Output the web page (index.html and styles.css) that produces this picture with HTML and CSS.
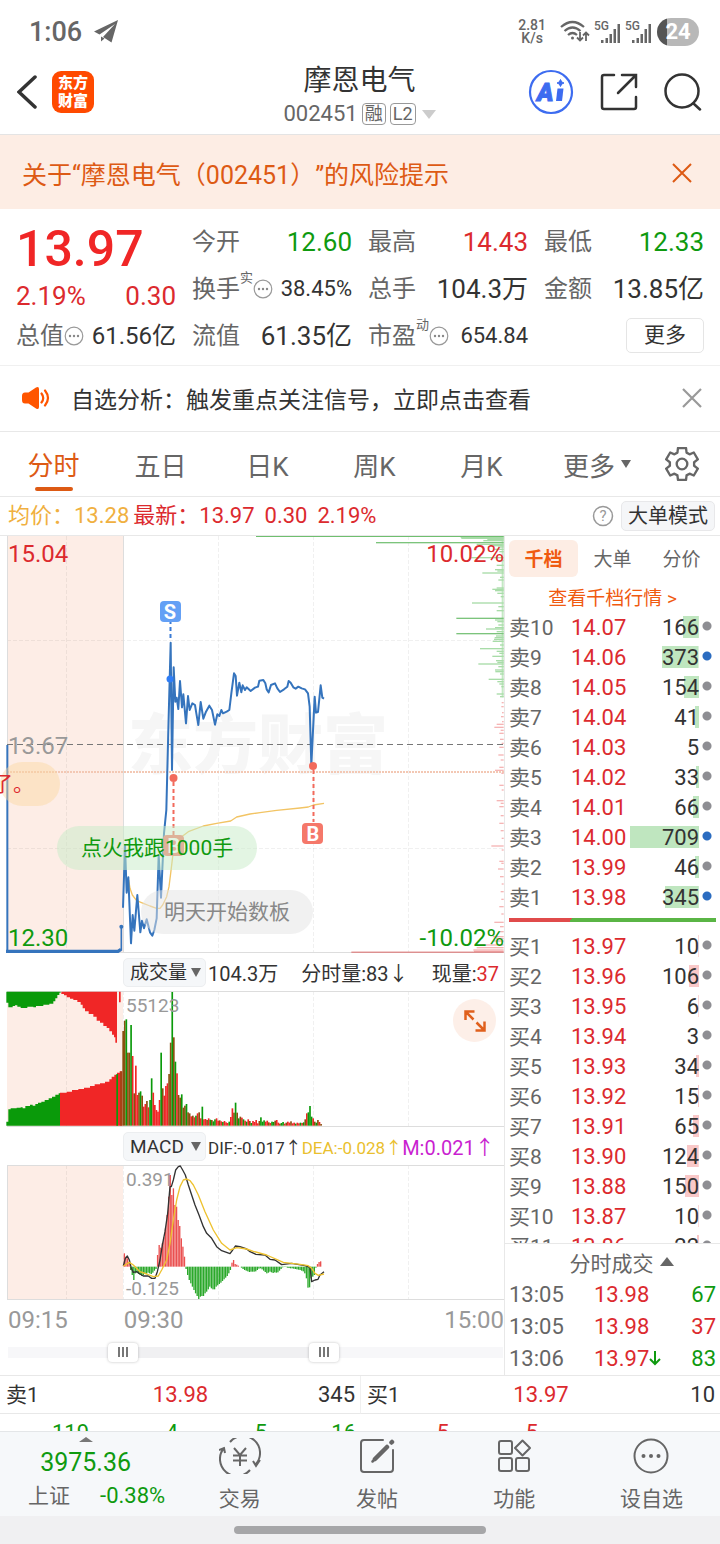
FILE: index.html
```html
<!DOCTYPE html>
<html lang="zh-CN">

<head>
    <meta charset="UTF-8">
    <meta name="viewport" content="width=device-width, initial-scale=1.0">
    <title>摩恩电气 002451</title>
    <link rel="stylesheet" href="styles.css">
</head>

<body>
    <!-- 系统状态栏 -->
    <div class="status-bar">
        <span class="clock">1:06</span>
        <svg class="plane" viewBox="0 0 24 24" width="24" height="24" fill="#666">
            <path d="M24 0 0 11.500 5.500 14.500 21 4 9 17 17.500 22.500z" />
            <path d="M7 16.500V21.500L10.500 18.500z" />
        </svg>
        <span class="net-speed">2.81<br>K/s</span>
        <svg viewBox="0 0 30 24" width="30" height="24" fill="none" stroke="#666" stroke-width="2.2">
            <path d="M1 7Q12.500-3 24 7M4.500 11Q12.500 4 20.500 11M8 15Q12.500 11 17 15" />
            <circle cx="12.500" cy="18" r="1.500" fill="#666" stroke="none" />
            <path d="M20 12v8M17 17.500l3 3 3-3M26 21v-8M23 15.500l3-3 3 3" stroke-width="1.800" />
        </svg>
        <span class="signal"><b>5G</b>
            <svg viewBox="0 0 20 20" width="20" height="20" fill="#666">
                <path d="M0 17h2.500v3H0zM4.500 15H7v5H4.500zM8.500 11H11v9H8.500zM12.500 6H15v14h-2.500zM16.500 1H19v19h-2.500z" />
            </svg>
        </span>
        <span class="signal"><b>5G</b>
            <svg viewBox="0 0 20 20" width="20" height="20" fill="#666">
                <path d="M0 17h2.500v3H0zM4.500 15H7v5H4.500zM8.500 11H11v9H8.500zM12.500 6H15v14h-2.500zM16.500 1H19v19h-2.500z" />
            </svg>
        </span>
        <span class="battery">24</span>
    </div>

    <!-- 顶部标题 -->
    <header class="header">
        <div class="header-left">
            <button class="icon-btn" aria-label="返回">
                <svg viewBox="0 0 20 34" width="20" height="34" fill="none" stroke="#333" stroke-width="3.500"
                    stroke-linecap="round">
                    <path d="M18 2 2 17 18 32" />
                </svg>
            </button>
            <div class="logo">东方<br>财富</div>
        </div>
        <div class="header-title">
            <h1>摩恩电气</h1>
            <div class="code">002451<span class="tag">融</span><span class="tag">L2</span><i class="triangle"></i></div>
        </div>
        <div class="header-right">
            <button class="icon-btn" aria-label="Ai">
                <svg viewBox="0 0 46 46" width="46" height="46">
                    <circle cx="23" cy="23" r="21" fill="none" stroke="#3d6cf0" stroke-width="2.200" />
                    <text class="ai-text" x="9" y="32">A</text>
                    <path d="M29.500 19.500h6L34 32h-6z" fill="#3d6cf0" />
                    <path d="M32.500 10.500l1.200 2.400 2.300 1.100-2.300 1.100-1.200 2.400-1.200-2.400-2.300-1.100 2.300-1.100z"
                        fill="#3d6cf0" stroke="#3d6cf0" />
                </svg>
            </button>
            <button class="icon-btn" aria-label="分享">
                <svg viewBox="0 0 38 38" width="38" height="38" fill="none" stroke="#333" stroke-width="2.500"
                    stroke-linecap="round">
                    <path d="M14 2H4Q2 2 2 4v30q0 2 2 2h30q2 0 2-2V24M22 2h14v12M36 2 18 20" />
                </svg>
            </button>
            <button class="icon-btn" aria-label="搜索">
                <svg viewBox="0 0 38 38" width="38" height="38" fill="none" stroke="#333" stroke-width="2.500"
                    stroke-linecap="round">
                    <circle cx="18" cy="18" r="16.500" />
                    <path d="M29.500 30.500 36 36.500" />
                </svg>
            </button>
        </div>
    </header>

    <!-- 风险提示 -->
    <div class="notice">
        <a href="#">关于“摩恩电气（002451）”的风险提示</a>
        <button class="icon-btn" aria-label="关闭提示">
            <svg viewBox="0 0 20 20" width="20" height="20" stroke="#dd5a14" stroke-width="2">
                <path d="M1 1 19 19M19 1 1 19" />
            </svg>
        </button>
    </div>

    <!-- 行情数据 -->
    <section class="quote">
        <div class="quote-main">
            <div class="price">13.97</div>
            <div class="change"><span>2.19%</span><span>0.30</span></div>
        </div>
        <div class="cell"><span>今开</span><b class="green">12.60</b></div>
        <div class="cell"><span>最高</span><b class="red">14.43</b></div>
        <div class="cell"><span>最低</span><b class="green">12.33</b></div>
        <div class="cell"><span>换手<sup>实</sup><svg class="dots" viewBox="0 0 20 20" width="20" height="20"><use href="#dots" /></svg></span><b class="small">38.45%</b></div>
        <div class="cell"><span>总手</span><b>104.3万</b></div>
        <div class="cell"><span>金额</span><b>13.85亿</b></div>
        <div class="cell"><span>总值<svg class="dots" viewBox="0 0 20 20" width="20" height="20"><use href="#dots" /></svg></span><b class="mid">61.56亿</b></div>
        <div class="cell"><span>流值</span><b>61.35亿</b></div>
        <div class="cell"><span>市盈<sup>动</sup><svg class="dots" viewBox="0 0 20 20" width="20" height="20"><use href="#dots" /></svg></span><b class="small">654.84</b></div>
        <div class="cell cell-more"><button class="more-btn">更多</button></div>
        <svg class="defs" width="0" height="0">
            <symbol id="dots" viewBox="0 0 20 20">
                <circle cx="10" cy="10" r="8.800" fill="none" stroke="#999" stroke-width="1.200" />
                <circle cx="6" cy="10" r="1.200" fill="#888" />
                <circle cx="10" cy="10" r="1.200" fill="#888" />
                <circle cx="14" cy="10" r="1.200" fill="#888" />
            </symbol>
        </svg>
    </section>

    <!-- 自选分析 -->
    <div class="tip">
        <svg viewBox="0 0 28 22" width="28" height="22" fill="#ff5500">
            <path d="M0 9Q0 5.500 3 5.500h3.500L14 .5Q17-1 17 2v18q0 3-3 1.500L6.500 16.500H3q-3 0-3-3.500z" />
            <path d="M19.500 6.500q3.500 4.500 0 9M23 3.500q6 7.500 0 15" fill="none" stroke="#ff5500" stroke-width="2.200"
                stroke-linecap="round" />
        </svg>
        <a href="#">自选分析：触发重点关注信号，立即点击查看</a>
        <button class="icon-btn" aria-label="关闭">
            <svg viewBox="0 0 20 20" width="20" height="20" stroke="#999" stroke-width="2.200">
                <path d="M1 1 19 19M19 1 1 19" />
            </svg>
        </button>
    </div>

    <!-- 周期切换 -->
    <nav class="tabs">
        <button class="active">分时</button>
        <button>五日</button>
        <button>日K</button>
        <button>周K</button>
        <button>月K</button>
        <button>更多<i class="triangle"></i></button>
        <button aria-label="设置">
            <svg viewBox="0 0 32 32" width="34" height="34" fill="none" stroke="#666" stroke-width="2.200"
                stroke-linejoin="round">
                <path d="M11.700 5.300 12.200 1h7.600l.5 4.300 2.800 1.600 4-1.700 3.800 6.500-3.500 2.700v3.200l3.500 2.700-3.800 6.500-4-1.700-2.800 1.600-.5 4.300h-7.600l-.5-4.300-2.800-1.600-4 1.700-3.800-6.500 3.500-2.700v-3.200l-3.500-2.700 3.800-6.500 4 1.700z" />
                <circle cx="16" cy="16" r="5" />
            </svg>
        </button>
    </nav>

    <div class="info">
        <span class="avg">均价：13.28</span>
        <span class="red">最新：13.97</span>
        <span class="red num">0.30</span>
        <span class="red num">2.19%</span>
        <button class="icon-btn help" aria-label="帮助">
            <svg viewBox="0 0 22 22" width="22" height="22">
                <circle cx="11" cy="11" r="9.500" fill="none" stroke="#999" stroke-width="1.500" />
                <text x="11" y="16" text-anchor="middle">?</text>
            </svg>
        </button>
        <button class="mode-btn">大单模式</button>
    </div>

    <main class="main">
        <div class="charts">
            <!-- 分时图 -->
            <div class="chart">
                <svg viewBox="0 0 504 417">
                    <rect class="pre" x="7" y="0" width="116" height="416" />
                    <path class="grid" d="M66.500 0V416M218.500 0V416M313.500 0V416M408.500 0V416M7 104.500H504M7 312.500H504" />
                    <path class="frame" d="M7.500 0V416M123.500 0V416M7 416.500H504" />
                    <text class="watermark" x="128" y="232">东方财富</text>
                    <path d="M7 208.500H504" stroke="#777" stroke-dasharray="6 4" />
                    <path d="M7 236H504" stroke="#f3c8b4" stroke-width="2" stroke-dasharray="2 1" />
                    <svg id="priceLayer" width="504" height="417" viewBox="0 18 1512 1251"></svg>
                    <text class="label up" x="8" y="26">15.04</text>
                    <text class="label" x="8" y="218">13.67</text>
                    <text class="label down" x="8" y="410">12.30</text>
                    <text class="label up end" x="504" y="26">10.02%</text>
                    <text class="label down end" x="504" y="410">-10.02%</text>
                    <path d="M170.500 84V104" stroke="#3a7bd5" stroke-width="2" stroke-dasharray="4 3" />
                    <path d="M173.500 246V302M313.500 234V286" stroke="#f26a5c" stroke-width="2" stroke-dasharray="4 3" />
                    <circle cx="170" cy="143" r="3.500" fill="#2f7df6" />
                    <circle cx="173.500" cy="242" r="4" fill="#f26a5c" />
                    <circle cx="313" cy="230" r="4" fill="#f26a5c" />
                    <rect x="160" y="65" width="21" height="21" rx="4" fill="#64a0f5" />
                    <text class="mark" x="170" y="83">S</text>
                    <rect x="163" y="299" width="21" height="21" rx="4" fill="#f5786a" />
                    <text class="mark" x="174" y="317">B</text>
                    <rect x="302" y="287" width="21" height="21" rx="4" fill="#f5786a" />
                    <text class="mark" x="313" y="305">B</text>
                </svg>
                <span class="bullet bullet-orange">了。</span>
                <span class="bullet bullet-green">点火我跟1000手</span>
                <span class="bullet bullet-gray">明天开始数板</span>
            </div>

            <div class="toolbar">
                <label class="picker"><select aria-label="指标一">
                        <option>成交量</option>
                    </select></label>
                <span>104.3万</span>
                <span class="push">分时量:83↓</span>
                <span class="push">现量:<em class="red">37</em></span>
            </div>

            <!-- 成交量 -->
            <div class="chart">
                <svg viewBox="0 0 504 136">
                    <rect class="pre" x="7" y="0" width="116" height="135" />
                    <path class="grid" d="M66.500 0V135M123.500 0V135M218.500 0V135M313.500 0V135M408.500 0V135" />
                    <path class="frame" d="M7 .5H504M7 135.500H504" />
                    <svg id="volumeLayer" width="504" height="136" viewBox="0 123 1512 408"></svg>
                    <text class="label mini" x="126" y="21">55123</text>
                </svg>
                <button class="expand" aria-label="全屏">
                    <svg viewBox="0 0 22 22" width="22" height="22" fill="none" stroke="#e0601c" stroke-width="2.500">
                        <path d="M1.500 10V1.500h9M1.500 1.500l8 8M11.500 20.500h9v-9M20.500 20.500l-8-8" />
                    </svg>
                </button>
            </div>

            <div class="toolbar macd">
                <label class="picker"><select aria-label="指标二">
                        <option>MACD</option>
                    </select></label>
                <span class="tight">DIF:-0.017↑</span>
                <span class="tight dea">DEA:-0.028↑</span>
                <span class="hist">M:0.021↑</span>
            </div>

            <!-- MACD -->
            <div class="chart">
                <svg viewBox="0 0 504 135">
                    <rect class="pre" x="7" y="0" width="116" height="134" />
                    <path class="grid" d="M66.500 0V134M123.500 0V134M218.500 0V134M313.500 0V134M408.500 0V134" />
                    <path class="frame" d="M7 .5H504M7 134.500H504M7.500 0V134" />
                    <text class="label mini" x="126" y="21">0.391</text>
                    <text class="label mini" x="126" y="130">-0.125</text>
                    <svg id="macdLayer" width="504" height="135" viewBox="0 645 1512 405"></svg>
                </svg>
            </div>

            <div class="axis"><span>09:15</span><span>09:30</span><span class="last">15:00</span></div>
            <div class="range">
                <input type="range" min="0" max="1000" value="215" aria-label="开始时间">
                <input type="range" min="0" max="1000" value="647" aria-label="结束时间">
            </div>
        </div>

        <!-- 盘口 -->
        <aside class="book">
            <div class="book-tabs">
                <button class="active">千档</button>
                <button>大单</button>
                <button>分价</button>
            </div>
            <a class="book-link" href="#">查看千档行情 &gt;</a>
            <table class="levels sell">
                <tr><th>卖10</th><td>14.07</td><td class="qty" style="--w: 23%">166</td><td class="dot"></td></tr>
                <tr><th>卖9</th><td>14.06</td><td class="qty" style="--w: 53%">373</td><td class="dot big"></td></tr>
                <tr><th>卖8</th><td>14.05</td><td class="qty" style="--w: 22%">154</td><td class="dot"></td></tr>
                <tr><th>卖7</th><td>14.04</td><td class="qty" style="--w: 6%">41</td><td class="dot"></td></tr>
                <tr><th>卖6</th><td>14.03</td><td class="qty" style="--w: 0%">5</td><td class="dot"></td></tr>
                <tr><th>卖5</th><td>14.02</td><td class="qty" style="--w: 5%">33</td><td class="dot"></td></tr>
                <tr><th>卖4</th><td>14.01</td><td class="qty" style="--w: 9%">66</td><td class="dot"></td></tr>
                <tr><th>卖3</th><td>14.00</td><td class="qty" style="--w: 100%">709</td><td class="dot big"></td></tr>
                <tr><th>卖2</th><td>13.99</td><td class="qty" style="--w: 6%">46</td><td class="dot"></td></tr>
                <tr><th>卖1</th><td>13.98</td><td class="qty" style="--w: 49%">345</td><td class="dot big"></td></tr>
            </table>
            <div class="ratio"></div>
            <div class="buy-window">
                <table class="levels buy">
                    <tr><th>买1</th><td>13.97</td><td class="qty" style="--w: 1%">10</td><td class="dot"></td></tr>
                    <tr><th>买2</th><td>13.96</td><td class="qty" style="--w: 15%">106</td><td class="dot"></td></tr>
                    <tr><th>买3</th><td>13.95</td><td class="qty" style="--w: 1%">6</td><td class="dot"></td></tr>
                    <tr><th>买4</th><td>13.94</td><td class="qty" style="--w: 0%">3</td><td class="dot"></td></tr>
                    <tr><th>买5</th><td>13.93</td><td class="qty" style="--w: 5%">34</td><td class="dot"></td></tr>
                    <tr><th>买6</th><td>13.92</td><td class="qty" style="--w: 2%">15</td><td class="dot"></td></tr>
                    <tr><th>买7</th><td>13.91</td><td class="qty" style="--w: 9%">65</td><td class="dot"></td></tr>
                    <tr><th>买8</th><td>13.90</td><td class="qty" style="--w: 17%">124</td><td class="dot"></td></tr>
                    <tr><th>买9</th><td>13.88</td><td class="qty" style="--w: 21%">150</td><td class="dot"></td></tr>
                    <tr><th>买10</th><td>13.87</td><td class="qty" style="--w: 1%">10</td><td class="dot"></td></tr>
                    <tr><th>买11</th><td>13.86</td><td class="qty" style="--w: 3%">22</td><td class="dot"></td></tr>
                </table>
            </div>
            <button class="deals-title">分时成交<i class="triangle"></i></button>
            <table class="deals">
                <tr><th>13:05</th><td>13.98</td><td class="green">67</td></tr>
                <tr><th>13:05</th><td>13.98</td><td class="red">37</td></tr>
                <tr><th>13:06</th><td>13.97<svg viewBox="0 0 12 16" width="12" height="16" fill="none" stroke="#0f9a0f" stroke-width="2"><path d="M6 1v13M1 9l5 5 5-5" /></svg></td><td class="green">83</td></tr>
            </table>
        </aside>
    </main>

    <!-- 买一卖一 -->
    <section class="best">
        <div class="side"><span>卖1</span><span class="red">13.98</span><span>345</span></div>
        <div class="side"><span>买1</span><span class="red">13.97</span><span>10</span></div>
        <div class="queue green"><span>119</span><span>4</span><span>5</span><span>16</span></div>
        <div class="queue red"><span>5</span><span>5</span><span></span><span></span></div>
    </section>

    <footer class="bottom-nav">
        <button class="index">
            <i class="triangle"></i>
            <span class="index-value">3975.36</span>
            <span class="index-row"><span class="name">上证</span><span>-0.38%</span></span>
        </button>
        <button>
            <svg viewBox="0 0 42 36" width="42" height="36" fill="none" stroke="#666" stroke-width="2">
                <path d="M11 4A17 17 0 0 1 37 26M41 22l-4 6-3-5M31 32A17 17 0 0 1 5 10M0 12l5-2 1 5" />
                <path d="M15 10l6 7 6-7M21 17v11M14 17.500h14M14 22.500h14" />
            </svg>
            交易
        </button>
        <button>
            <svg viewBox="0 0 36 36" width="36" height="36" fill="none" stroke="#666" stroke-width="2"
                stroke-linecap="round">
                <path d="M24 2H5Q2 2 2 5v26q0 3 3 3h26q3 0 3-3V12" />
                <path d="M16 21 28 9M32.500 4.500l.5-.5" stroke-width="4.500" />
                <path d="M13.500 23.500 18 19" stroke-width="2.500" />
            </svg>
            发帖
        </button>
        <button>
            <svg viewBox="0 0 36 36" width="36" height="36" fill="none" stroke="#666" stroke-width="2"
                stroke-linejoin="round">
                <rect x="3" y="3" width="13" height="13" rx="2" />
                <rect x="3" y="20" width="13" height="13" rx="2" />
                <rect x="20" y="20" width="13" height="13" rx="2" />
                <path d="M26.500 2.500 34 10l-7.500 7.500L19 10z" />
            </svg>
            功能
        </button>
        <button>
            <svg viewBox="0 0 36 36" width="36" height="36" fill="#666">
                <circle cx="18" cy="18" r="16.500" fill="none" stroke="#666" stroke-width="2" />
                <circle cx="10.500" cy="18" r="2" />
                <circle cx="18" cy="18" r="2" />
                <circle cx="25.500" cy="18" r="2" />
            </svg>
            设自选
        </button>
    </footer>
    <div class="gesture"><i></i></div>

    <script src="script.js"></script>
</body>

</html>
```
FILE: styles.css
```css
* {
    box-sizing: border-box;
}

body {
    margin: 0;
    background: #fff;
    color: #333;
    font-family: Roboto, "Noto Sans CJK SC", sans-serif;
    font-size: 22px;
}

button {
    padding: 0;
    border: none;
    background: none;
    color: inherit;
    font: inherit;
    cursor: pointer;
}

a {
    color: inherit;
    text-decoration: none;
}

svg {
    display: block;
    flex: none;
}

b,
em,
i {
    font-weight: normal;
    font-style: normal;
}

.red {
    color: #dc2a2e;
}

.green {
    color: #0f9a0f;
}

.icon-btn {
    display: flex;
}

/* 小三角 */
.triangle {
    display: inline-block;
    border: 5px solid transparent;
    border-top: 8px solid #666;
    border-bottom: none;
}

/* 状态栏 */
.status-bar {
    display: flex;
    align-items: center;
    height: 64px;
    padding: 0 21px 0 29px;
    color: #666;
}

.clock {
    font-size: 27px;
    font-weight: 500;
}

.plane {
    margin: 0 auto 0 12px;
}

.net-speed {
    margin-right: 14px;
    font-size: 14px;
    font-weight: 500;
    line-height: 13px;
    text-align: center;
}

.signal {
    display: flex;
    align-items: flex-start;
    margin-left: 4px;
}

.signal b {
    margin-right: -8px;
    font-size: 12px;
    font-weight: 500;
    line-height: 10px;
}

.signal svg {
    margin-top: 2px;
}

.battery {
    width: 42px;
    margin-left: 5px;
    border-radius: 14px;
    background: linear-gradient(90deg, #555 10px, #b8b8b8 10px);
    color: #fff;
    font-size: 22px;
    font-weight: 700;
    line-height: 28px;
    text-align: center;
}

/* 标题栏 */
.header {
    display: grid;
    grid-template-columns: 1fr auto 1fr;
    align-items: center;
    height: 71px;
    padding: 0 18px 14px 17px;
    border-bottom: 1px solid #e4e4e4;
}

.header-left,
.header-right {
    display: flex;
    align-items: center;
    margin-bottom: 10px;
}

.header-left {
    gap: 15px;
}

.header-right {
    justify-content: flex-end;
    gap: 26px;
}

.logo {
    width: 42px;
    padding: 3px 0;
    border-radius: 9px;
    background: #ff4a00;
    color: #fff;
    font-size: 15px;
    font-weight: 900;
    line-height: 18px;
    text-align: center;
}

.header-title {
    text-align: center;
}

.header-title h1 {
    margin: 0;
    font-size: 28px;
    font-weight: normal;
    line-height: 34px;
}

.code {
    display: flex;
    align-items: center;
    justify-content: center;
    color: #666;
    font-size: 22px;
    line-height: 32px;
}

.tag {
    margin-left: 4px;
    padding: 0 2px;
    border: 1px solid #999;
    border-radius: 4px;
    font-size: 18px;
    line-height: 20px;
}

.code .triangle {
    margin-left: 6px;
    border-width: 9px 7px 0;
    border-top-color: #ccc;
}

.ai-text {
    fill: #3d6cf0;
    stroke: #3d6cf0;
    font-size: 25px;
    font-style: italic;
    font-weight: 900;
}

/* 风险提示 */
.notice {
    display: flex;
    align-items: center;
    justify-content: space-between;
    height: 74px;
    padding: 2px 28px 0 22px;
    background: #fdede4;
    color: #dd5a14;
    font-size: 25px;
    text-spacing-trim: space-all;
}

/* 行情 */
.quote {
    display: grid;
    grid-template-columns: repeat(4, 1fr);
    grid-auto-rows: 47px;
    column-gap: 16px;
    padding: 9px 16px 6px;
    border-bottom: 1px solid #f0f0f0;
    font-size: 26px;
}

.quote-main {
    grid-row: span 2;
    color: #dc2a2e;
}

.price {
    color: #f02626;
    font-size: 50px;
    font-weight: 500;
    line-height: 63px;
}

.change {
    display: flex;
    justify-content: space-between;
    line-height: 31px;
}

.cell {
    display: flex;
    align-items: center;
    justify-content: space-between;
    line-height: 36px;
    white-space: nowrap;
}

.cell > span {
    display: flex;
    align-items: center;
    color: #666;
    font-size: 24px;
}

.cell sup {
    align-self: flex-start;
    font-size: 13px;
    line-height: 13px;
}

.cell .small {
    font-size: 22px;
}

.cell .mid {
    font-size: 24px;
}

.cell-more {
    justify-content: flex-end;
}

.more-btn {
    width: 78px;
    border: 1px solid #e5e5e5;
    border-radius: 5px;
    font-size: 21px;
    line-height: 33px;
}

.defs {
    position: absolute;
}

/* 自选分析 */
.tip {
    display: flex;
    align-items: center;
    height: 66px;
    padding: 0 18px 2px 22px;
    border-bottom: 1px solid #e8e8e8;
    font-size: 23px;
}

.tip a {
    flex: 1;
    padding-left: 21px;
}

/* 周期 */
.tabs {
    display: grid;
    grid-template-columns: repeat(5, 107fr) 124fr 46fr;
    height: 65px;
    padding-right: 15px;
    border-bottom: 1px solid #e8e8e8;
    color: #666;
    font-size: 26px;
}

.tabs button {
    display: flex;
    align-items: center;
    justify-content: center;
}

.tabs .active {
    flex-direction: column;
    justify-content: flex-end;
    padding-bottom: 5px;
    color: #dd5a14;
    line-height: 42px;
}

.tabs .active::after {
    content: "";
    width: 38px;
    height: 4px;
    border-radius: 2px;
    background: #dd5a14;
}

.tabs .triangle {
    margin-left: 6px;
}

.info {
    display: flex;
    align-items: center;
    height: 39px;
    padding: 0 5px 0 8px;
    border-bottom: 1px solid #e8e8e8;
    line-height: 34px;
}

.info .avg {
    margin-right: 4px;
    color: #f0b040;
}

.info .num {
    margin-left: 10px;
}

.info .help {
    margin: 0 7px 0 auto;
}

.help text {
    fill: #999;
    font-size: 15px;
}

.mode-btn {
    width: 94px;
    border: 1px solid #e8e8ea;
    border-radius: 5px;
    background: #f5f6f8;
    font-size: 20px;
    line-height: 28px;
}

/* 图表 */
.main {
    display: grid;
    grid-template-columns: 7fr 3fr;
    border-bottom: 1px solid #e8e8e8;
}

.charts {
    min-width: 0;
}

.chart {
    position: relative;
    overflow: hidden;
}

.chart > svg {
    width: 100%;
}

.pre {
    fill: #fdede6;
}

.grid {
    fill: none;
    stroke: #000;
    stroke-dasharray: 4 2;
    stroke-opacity: .06;
}

.frame {
    fill: none;
    stroke: #ddd;
}

.watermark {
    fill: #f6f6f6;
    font-size: 65px;
    font-weight: 900;
}

.label {
    fill: #999;
    font-size: 24px;
}

.label.up {
    fill: #dc2a2e;
}

.label.down {
    fill: #0f9a0f;
}

.label.end {
    text-anchor: end;
}

.label.mini {
    font-size: 19px;
}

.mark {
    fill: #fff;
    font-size: 20px;
    font-weight: 700;
    text-anchor: middle;
}

/* 弹幕 */
.bullet {
    position: absolute;
    border-radius: 22px;
    font-size: 21px;
    line-height: 44px;
    white-space: nowrap;
}

.bullet-orange {
    top: 226px;
    left: 0;
    width: 60px;
    background: rgba(250, 215, 160, .45);
    color: #dc2a2e;
    text-indent: -8px;
}

.bullet-green {
    top: 290px;
    left: 57px;
    padding: 0 24px;
    background: rgba(200, 235, 200, .5);
    color: #0f9a0f;
}

.bullet-gray {
    top: 354px;
    left: 141px;
    padding: 0 23px;
    background: rgba(228, 228, 228, .5);
    color: #888;
}

.toolbar {
    display: flex;
    align-items: center;
    height: 38px;
    padding: 0 5px 0 123px;
    font-size: 20px;
    white-space: nowrap;
}

.toolbar .push {
    margin-left: auto;
}

.toolbar .tight {
    font-size: 17px;
}

.toolbar .dea {
    color: #eabf2e;
}

.toolbar .hist {
    color: #c91fd0;
}

.picker {
    position: relative;
    margin-right: 2px;
}

.picker::after {
    content: "";
    position: absolute;
    top: 10px;
    right: 5px;
    border: 5px solid transparent;
    border-top: 9px solid #666;
    border-bottom: none;
    pointer-events: none;
}

.picker select {
    display: block;
    width: 83px;
    height: 29px;
    padding: 0 0 0 6px;
    border: 1px solid #eceef0;
    border-radius: 5px;
    background: #f5f7f9;
    color: #333;
    font: inherit;
    font-size: 19px;
    appearance: none;
}

.expand {
    position: absolute;
    top: 8px;
    right: 8px;
    display: flex;
    align-items: center;
    justify-content: center;
    width: 43px;
    height: 43px;
    border-radius: 50%;
    background: #fdefe8;
}

.axis {
    display: flex;
    gap: 56px;
    padding-left: 8px;
    color: #999;
    font-size: 24px;
    line-height: 41px;
}

.axis .last {
    margin-left: auto;
}

/* 区间滑块 */
.range {
    display: grid;
    align-items: center;
    height: 22px;
    margin: 0 1px 12px 8px;
    background: linear-gradient(90deg, #f7f7f9 23%, #f0f0f2 23% 64%, #f7f7f9 64%) center / 100% 11px no-repeat;
}

.range input {
    grid-area: 1 / 1;
    width: 100%;
    height: 20px;
    margin: 0;
    background: none;
    appearance: none;
    pointer-events: none;
}

.range input::-webkit-slider-thumb {
    width: 30px;
    height: 19px;
    border-radius: 4px;
    background:
        linear-gradient(90deg, #777 2px, transparent 2px 4px, #777 4px 6px, transparent 6px 8px, #777 8px) center / 10px 10px no-repeat,
        #fff;
    box-shadow: 0 0 3px rgba(0, 0, 0, .25);
    appearance: none;
    pointer-events: auto;
}

/* 盘口 */
.book {
    padding: 4px 4px 0;
    border-left: 1px solid #e8e8e8;
}

.book-tabs {
    display: grid;
    grid-template-columns: repeat(3, 1fr);
    color: #666;
    font-size: 19px;
}

.book-tabs button {
    padding-top: 3px;
    line-height: 34px;
}

.book-tabs .active {
    border-radius: 6px;
    background: #fdede4;
    color: #f05a10;
    font-weight: 700;
}

.book-link {
    display: block;
    padding-top: 7px;
    color: #f05a10;
    font-size: 19px;
    line-height: 29px;
    text-align: center;
}

table {
    width: 100%;
    border-collapse: collapse;
    table-layout: fixed;
}

th,
td {
    padding: 0;
    color: #dc2a2e;
    font-weight: normal;
    text-align: left;
}

th {
    width: 62px;
    color: #666;
}

.levels tr {
    height: 30px;
    line-height: 30px;
}

.levels th {
    font-size: 21px;
}

.levels .qty {
    width: 69px;
    background: linear-gradient(var(--bar), var(--bar)) right 3px / var(--w) 22px no-repeat;
    color: #333;
    text-align: right;
}

.sell {
    --bar: #bfe6bf;
}

.buy {
    --bar: #f9c8c8;
}

.dot {
    width: 17px;
    background: radial-gradient(circle at 8px 13px, #8e8e93 4px, transparent 5px);
}

.dot.big {
    background: radial-gradient(circle at 8px 13px, #2b6cc0 4px, transparent 5px);
}

.ratio {
    height: 4px;
    margin: 5px 0 10px;
    background: linear-gradient(120deg, #e04b4b 30%, #5ab545 30%);
}

.buy-window {
    height: 312px;
    margin: 0 -4px;
    padding: 0 4px;
    border-bottom: 1px solid #e8e8e8;
    overflow: hidden;
}

.deals-title {
    display: flex;
    align-items: center;
    justify-content: center;
    width: 100%;
    height: 35px;
    padding-left: 18px;
    color: #666;
    font-size: 21px;
}

.deals-title .triangle {
    margin-left: 6px;
    border-width: 0 7px 9px;
    border-bottom: 9px solid #666;
}

.deals tr {
    height: 32px;
    line-height: 32px;
}

.deals th {
    width: 85px;
}

.deals td:last-child {
    width: 52px;
    text-align: right;
}

.deals td.green {
    color: #0f9a0f;
}

.deals svg {
    display: inline-block;
}

/* 买一卖一 */
.best {
    display: grid;
    grid-template-columns: 1fr 1fr;
}

.side {
    display: grid;
    grid-template-columns: 1fr auto 1fr;
    height: 38px;
    padding: 0 5px 0 6px;
    border-bottom: 1px solid #e8e8e8;
    line-height: 38px;
}

.side + .side {
    border-left: 1px solid #f0f0f0;
}

.side span:first-child {
    font-size: 21px;
}

.side span:last-child {
    text-align: right;
}

.queue {
    display: grid;
    grid-template-columns: repeat(4, 1fr);
    height: 17px;
    padding-right: 4px;
    line-height: 38px;
    text-align: right;
    overflow: hidden;
}

/* 底部导航 */
.bottom-nav {
    display: grid;
    grid-template-columns: 171fr repeat(4, 137fr);
    height: 85px;
    border-top: 1px solid #e4e6e8;
    background: #f6f8fa;
    color: #666;
    font-size: 21px;
}

.bottom-nav button {
    display: flex;
    flex-direction: column;
    align-items: center;
    padding-top: 6px;
    line-height: 30px;
}

.bottom-nav button svg {
    margin-bottom: 10px;
}

.bottom-nav .index {
    padding-top: 5px;
    color: #0f9a0f;
}

.index .triangle {
    border-width: 0 7px 5px;
    border-bottom: 5px solid #777;
}

.index-value {
    font-size: 25px;
    line-height: 42px;
}

.index-row {
    display: flex;
    gap: 30px;
    padding-left: 22px;
    font-size: 22px;
    line-height: 24px;
}

.index-row .name {
    color: #666;
    font-size: 21px;
}

.gesture {
    padding: 10px 0;
    background: #f0f0f2;
}

.gesture i {
    display: block;
    width: 35%;
    height: 8px;
    margin: 0 auto;
    border-radius: 4px;
    background: #a6a6a8;
}
```
FILE: script.js
```js
var NS = 'http://www.w3.org/2000/svg';
var RED = '#f02626';
var GREEN = '#0a9a0a';
var STEP = 4.75; // 每分钟的宽度
var OPEN_X = 367;

function add(layer, name, attrs) {
    var el = document.createElementNS(NS, name);
    for (var key in attrs) {
        el.setAttribute(key, attrs[key]);
    }
    layer.appendChild(el);
}

function line(layer, points, color, width) {
    add(layer, 'polyline', { points: points, fill: 'none', stroke: color, 'stroke-width': width, 'stroke-linejoin': 'round' });
}

function bar(layer, x, y, w, h, color) {
    add(layer, 'rect', { x: x, y: y, width: w, height: h, fill: color });
}

// 分时图
var price = document.getElementById('priceLayer');

var asks = [[22, 632], [25, 634], [28, 712], [32, 700], [38, 378], [43, 680], [47, 720], [51, 745], [58, 730], [65, 748], [83, 660], [92, 745],
    [106, 740], [119, 735], [123, 742], [129, 697], [142, 750], [150, 745], [174, 740], [178, 727], [182, 735], [190, 742], [200, 752],
    [219, 666], [230, 745], [242, 740], [265, 619], [270, 735], [275, 742], [285, 745], [293, 735], [297, 708], [305, 740], [311, 619],
    [318, 738], [323, 734], [328, 732], [334, 728], [345, 750], [356, 690], [364, 740], [370, 748], [379, 727], [392, 738], [397, 742],
    [402, 685], [410, 745], [420, 735], [425, 736], [432, 750], [448, 716], [455, 742], [462, 748], [470, 754], [492, 740], [500, 750]];
var bids = [[518, 755], [530, 754], [548, 756], [560, 753], [575, 756], [583, 740], [592, 733], [601, 752], [610, 748], [628, 750], [640, 755],
    [652, 748], [675, 745], [690, 752], [712, 748], [721, 735], [730, 754], [766, 748], [780, 755], [812, 740], [820, 752], [830, 748],
    [857, 752], [880, 748], [902, 752], [925, 755], [948, 724], [960, 755], [994, 748], [1000, 754], [1017, 744], [1040, 750], [1062, 755],
    [1085, 752], [1108, 754], [1130, 748], [1152, 754], [1177, 733], [1190, 750], [1205, 748], [1220, 728], [1226, 738], [1233, 730],
    [1245, 690], [1253, 680], [1260, 670], [1264, 672]];

bar(price, 1505, 18, 6, 484, '#c4e8c4');
asks.forEach(function (d) {
    bar(price, 750 + d[1], d[0] - 2, 761 - d[1], 4, d[1] < 620 ? '#7cc47c' : '#a8dca8');
});
bids.forEach(function (d) {
    bar(price, 750 + d[1], d[0] - 2, 761 - d[1], 4, '#f5b5b5');
});
// 涨停、跌停处的挂单
bar(price, 768, 18, 743, 3, '#6fbf6f');
bar(price, 1054, 1265, 457, 3, '#dc6a6a');

line(price, '386,1050 390,1075 397,1095 410,1112 430,1120 450,1128 470,1135 480,1135 488,1125 500,1100 507,1070 512,1030 518,980 527,945 ' +
    '545,920 565,905 610,888 650,880 692,873 710,861 750,852 780,848 830,841 900,834 925,831 940,825 972,820', '#f2c464', 4);

line(price, '22,645 22,1266', '#3574bd', 6);
line(price, '18,1264 354,1264 363,1258', '#3574bd', 10);
line(price, '364,1262 364,1190', '#3574bd', 5);
add(price, 'circle', { cx: 364, cy: 1190, r: 6, fill: '#3574bd' });

line(price, '369,1133 375,945 380,1088 385,1042 393,1240 398,1155 403,1202 412,1095 421,1207 426,1172 432,1195 440,1168 450,1207 457,1217 ' +
    '463,1200 470,1165 476,975 483,1103 492,910 499,840 506,560 512,338 516,720 521,412 526,515 530,503 535,537 540,453 546,532 550,493 ' +
    '558,580 564,498 569,540 577,520 585,525 589,550 595,585 602,516 610,566 618,545 628,527 636,540 645,584 652,553 658,558 664,540 669,550 ' +
    '680,545 688,540 694,490 702,430 707,438 711,497 718,458 724,487 728,466 735,480 740,472 752,483 765,473 774,470 778,452 790,450 796,460 ' +
    '800,478 806,487 813,465 825,460 832,475 840,486 852,478 862,470 866,453 872,458 880,472 887,476 895,470 905,475 915,478 924,490 929,530 ' +
    '934,705 944,500 948,548 954,546 962,466 967,503 972,506', '#3574bd', 6);

// 成交量
var volume = document.getElementById('volumeLayer');

add(volume, 'path', { d: 'M19 125V158H25V172H38V168H45V166H52V170H62V174H82V170H100V172H108V168H130V164H148V161H160V154H166V145H172V135H178V128H182V125Z', fill: GREEN });
add(volume, 'path', { d: 'M184 125V132H192V136H200V142H210V146H220V150H232V156H242V164H248V175H255V184H266V192H280V200H290V212H300V218H310V228H320V234H328V244H336V254H342V262H346V278H351V125ZM357 125V157H362V125Z', fill: RED });
add(volume, 'path', { d: 'M19 527V515H25V478H32V475H50V473H62V472H68V475H76V468H90V464H98V467H106V462H114V458H124V455H134V450H146V445H156V440H166V434H176V430H180V527Z', fill: GREEN });
add(volume, 'path', { d: 'M180 527V428H200V425H216V420H235V417H252V413H270V408H284V403H300V400H315V395H328V388H335V380H343V374H351V368H359V364H367V527Z', fill: RED });
bar(volume, 349, 372, 5, 155, GREEN);
bar(volume, 361, 364, 4, 163, '#8a5010');

var tops = [243, 212, 208, 308, 308, 225, 318, 430, 347, 435, 428, 424, 437, 470, 462, 453, 472, 450, 385, 428, 465, 480, 485, 450, 308,
    415, 437, 408, 400, 372, 278, 126, 262, 335, 370, 435, 443, 433, 473, 467, 462, 487, 490, 499, 497, 502, 497, 490, 487, 505,
    470, 508, 507, 510, 505, 509, 510, 514, 508, 505, 512, 511, 514, 516, 513, 517, 519, 515, 501, 475, 488, 458, 488, 505, 500,
    503, 508, 512, 515, 508, 513, 519, 513, 516, 510, 520, 513, 502, 515, 511, 515, 512, 517, 519, 515, 516, 512, 510, 518, 521,
    519, 516, 521, 518, 515, 518, 514, 520, 518, 521, 518, 520, 518, 519, 517, 508, 490, 487, 468, 500, 505, 515, 518, 510, 516, 522];
// r 红 g 绿 m 混合
var kinds = 'mmgmmgrmrrmgmrrmrggrrrrrgmrrrmmgmgrmmgmmgmmrmrgrmrgrrmrgmggrrmrgrrrgrrmgmgmrgrgrmgrrrrmgggrrmrggmrrmggrmrrmrrgrrgrgmrgggrmgmrmg';

tops.forEach(function (top, i) {
    var color = { r: RED, g: GREEN, m: '#8a5010' }[kinds[i] || 'g'];
    bar(volume, OPEN_X + i * STEP, top, 5, 527 - top, color);
});

// MACD
var macd = document.getElementById('macdLayer');
var ZERO = 950;
var hist = [910, 920, 925, 935, 960, 975, 990, 970, 968, 972, 975, 978, 975, 972, 972, 968, 970, 972, 968, 962, 957, 915, 885, 893, 880, 862,
    835, 795, 740, 675, 735, 715, 765, 770, 810, 828, 865, 890, 920, 957, 975, 990, 1000, 1010, 1020, 1030, 1038, 1047, 1040, 1038, 1038,
    1030, 1025, 1018, 1010, 1015, 1018, 1018, 1010, 1006, 1002, 998, 993, 988, 983, 978, 970, 960, 938, 930, 942, 944, 947, 950, 953, 957,
    960, 962, 964, 966, 965, 965, 965, 964, 960, 956, 955, 958, 962, 966, 970, 968, 965, 967, 969, 967, 968, 967, 962, 957, 952, 951, 951,
    953, 954, 955, 955, 956, 957, 958, 959, 960, 962, 964, 970, 985, 1013, 1012, 985, 980, 975, 953, 942, 936, 934];

hist.forEach(function (v, i) {
    var x = 371 + i * STEP;
    if (v < ZERO) {
        bar(macd, x, v, 4, ZERO - v, '#ea5050');
    } else {
        bar(macd, x, ZERO, 4, v - ZERO, '#2aa82a');
    }
});

line(macd, '370,948 376,925 382,918 388,930 394,955 400,967 410,965 420,972 430,978 445,978 455,985 465,985 472,965 480,930 488,880 495,845 ' +
    '503,790 510,710 514,710 520,690 527,660 535,650 541,648 548,660 556,675 565,705 575,735 585,765 597,795 610,830 620,850 635,865 650,890 ' +
    '665,902 690,911 698,900 706,888 720,890 740,897 750,905 768,913 795,915 810,928 825,930 845,944 875,940 915,947 930,952 935,995 945,990 ' +
    '954,988 960,975 972,965', '#333', 4);
line(macd, '370,948 388,937 400,945 420,965 440,972 460,980 475,978 485,960 500,930 510,880 520,810 530,750 540,710 550,690 560,687 570,692 ' +
    '580,705 595,735 615,785 640,840 665,880 690,900 710,893 740,897 760,904 800,915 850,937 900,943 925,947 935,955 945,970 955,976 972,972',
    '#eec22f', 4);
```
